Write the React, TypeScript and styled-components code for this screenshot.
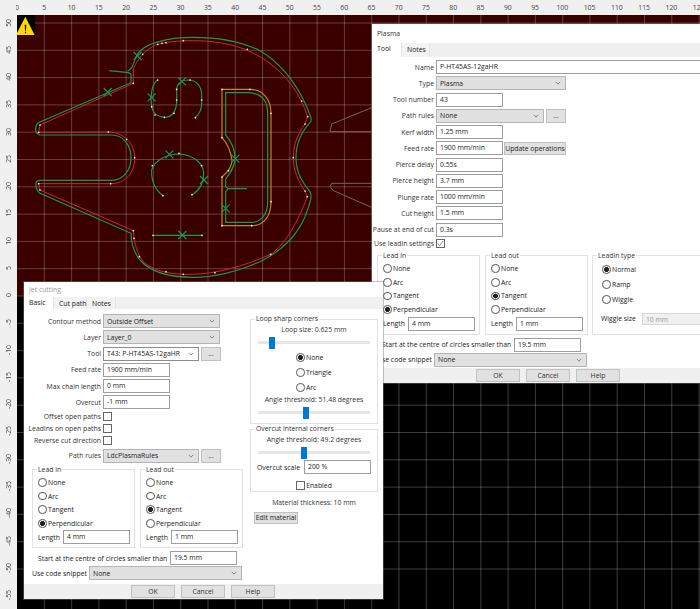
import React from 'react';
import styled, { createGlobalStyle } from 'styled-components';

const GlobalStyle = createGlobalStyle`
  html, body {
    margin: 0;
    padding: 0;
    background: #000;
  }
  * {
    box-sizing: border-box;
  }
`;

const TICK = 27.28;
const topTicks = Array.from({ length: 27 }, (_, i) => i * 5);
const leftTicks = Array.from({ length: 22 }, (_, i) => 50 - i * 5);
const gridX = Array.from({ length: 26 }, (_, i) => 133 + i * 81.84);
const gridY = Array.from({ length: 21 }, (_, i) => 69 + i * 81.9);

const dots = [
  [120, 375], [116, 397], [325, 396], [380, 418], [404, 473], [332, 551], [116, 551], [120, 570],
  [400, 692], [402, 715], [418, 770], [498, 815], [550, 823], [645, 818], [812, 763], [922, 590],
  [915, 573], [880, 473], [915, 372], [923, 350], [905, 303], [742, 148], [550, 122], [498, 128],
  [486, 130], [473, 133], [428, 163], [400, 250], [473, 240], [530, 268], [530, 300], [522, 340],
  [493, 352], [465, 345], [455, 320], [570, 240], [605, 300], [605, 497], [586, 353], [489, 587],
  [457, 497], [537, 460], [576, 584], [459, 706], [606, 706], [666, 268], [750, 268], [813, 340],
  [813, 605], [755, 677], [666, 677], [666, 531], [685, 512], [666, 413],
];

const crosses = [
  [413, 168], [323, 276], [455, 292], [546, 244], [508, 463], [612, 540], [706, 476], [677, 625], [547, 705],
];

const Chevron = () => (
  <ChevronIcon viewBox="0 0 8 5">
    <path d="M1 1l3 3 3-3" fill="none" stroke="#555" strokeWidth="0.9" />
  </ChevronIcon>
);

const Drawing = () => (
  <CanvasSvg viewBox="51 45 2049 1782">
    <rect x="51" y="45" width="2049" height="843" fill="#3a0000" />
    {gridX.map((x) => (
      <line key={x} x1={x} y1="45" x2={x} y2="1827" stroke="rgba(255,255,255,0.24)" strokeWidth="3" />
    ))}
    {gridY.map((y) => (
      <line key={y} x1="51" y1={y} x2="2100" y2={y} stroke="rgba(255,255,255,0.24)" strokeWidth="3" />
    ))}
    <path
      d="M1115 323L995 372L990 395H1115M1115 550H995L990 560L1000 572L1115 622"
      fill="none"
      stroke="#7a6060"
      strokeWidth="3"
    />
    <path
      d="M400 250L120 375L116 397L325 396C370 396 404 430 404 473C404 520 375 551 332 551L116 551L120 570L400 692L402 715C408 745 415 770 435 790C470 815 510 823 570 823C650 823 740 795 812 763C860 730 895 660 922 590L915 573C895 545 880 510 880 473C880 430 895 400 915 372L923 350C900 280 860 225 800 183C750 148 680 122 580 122C520 122 470 128 450 145C425 160 405 190 400 210Z"
      fill="none"
      stroke="#c8282d"
      strokeWidth="3"
    />
    <path
      d="M666 268H750C790 268 813 300 813 340V605C813 650 790 677 755 677H666V531L685 512C692 500 696 490 696 480C692 455 682 430 666 413Z"
      fill="none"
      stroke="#c08a10"
      strokeWidth="3.5"
    />
    <g fill="none" stroke="#159a50" strokeWidth="3.5">
      <path d="M328 212L385 218L393 222V248L118 367Q108 372 107 385Q105 398 118 405H335C370 405 393 435 393 473C393 510 370 541 335 541H120Q110 541 108 548Q105 568 120 580L393 700C393 730 400 755 420 780C450 815 510 832 580 832C640 832 700 820 780 785C830 760 885 720 915 650C930 610 938 590 930 575C910 550 888 520 888 473C888 430 905 395 930 368C938 360 930 345 920 320C885 240 830 180 780 152C725 125 650 112 580 112C540 112 505 116 480 124C445 132 420 145 407 172C400 190 398 208 383 213" />
      <path d="M741 566H685L677 575V667H755C785 667 803 640 803 605V340C803 300 785 278 740 278H677V405C690 420 705 445 705 475C705 500 690 520 677 537V560L685 566" />
      <path d="M473 240C455 250 450 290 455 320C460 345 480 352 495 352C520 350 530 330 530 300V270C530 250 545 240 565 240C590 240 605 260 605 285V310C605 330 595 345 586 353" />
      <path d="M489 587C465 570 453 540 455 510C465 480 500 462 540 462C580 465 610 490 611 520C612 545 600 570 577 584" />
      <path d="M459 706H606" />
      {crosses.map(([x, y]) => (
        <path key={x} d={`M${x - 12} ${y - 12}L${x + 12} ${y + 12}M${x + 12} ${y - 12}L${x - 12} ${y + 12}`} />
      ))}
    </g>
    {dots.map(([x, y]) => (
      <circle key={`${x}-${y}`} cx={x} cy={y} r="2.6" fill="#f4e8e8" />
    ))}
    <rect x="51" y="45" width="54" height="60" fill="#000" />
    <path d="M48 105L76 50L104 105Z" fill="#ffd800" />
    <path d="M74 74H79L78 92H75ZM74.5 95H78.5V100H74.5Z" fill="#222" />
  </CanvasSvg>
);

const Field = ({ width, children }: { width: number; children: React.ReactNode }) => (
  <InputBox $width={width}>{children}</InputBox>
);

const Combo = ({ width, light, children }: { width: number; light?: boolean; children: React.ReactNode }) => (
  <ComboBox $width={width} $light={light}>
    <span>{children}</span>
    <Chevron />
  </ComboBox>
);

const Choice = ({ checked, children }: { checked?: boolean; children: React.ReactNode }) => (
  <ChoiceRow>
    <RadioDot $checked={checked} />
    {children}
  </ChoiceRow>
);

const LeadGroup = ({ title, selected, length }: { title: string; selected: string; length: string }) => (
  <Group $width={103}>
    <Legend>{title}</Legend>
    {['None', 'Arc', 'Tangent', 'Perpendicular'].map((option) => (
      <Choice key={option} checked={option === selected}>
        {option}
      </Choice>
    ))}
    <LengthRow>
      <span>Length</span>
      <Field width={67}>{length}</Field>
    </LengthRow>
  </Group>
);

const PlasmaDialog = () => (
  <Dialog $left={372} $top={24} $width={340} $height={359}>
    <Title>Plasma</Title>
    <Tabs>
      <Tab $active $width={30}>
        Tool
      </Tab>
      <Tab $width={28}>Notes</Tab>
    </Tabs>
    <PlasmaBody>
      <Row>
        <RowLabel $width={62}>Name</RowLabel>
        <Field width={280}>P-HT45AS-12gaHR</Field>
      </Row>
      <Row>
        <RowLabel $width={62}>Type</RowLabel>
        <Combo width={130}>Plasma</Combo>
      </Row>
      <Row>
        <RowLabel $width={62}>Tool number</RowLabel>
        <Field width={67}>43</Field>
      </Row>
      <Row>
        <RowLabel $width={62}>Path rules</RowLabel>
        <Combo width={108}>None</Combo>
        <DotsButton>...</DotsButton>
      </Row>
      <Row>
        <RowLabel $width={62}>Kerf width</RowLabel>
        <Field width={67}>1.25 mm</Field>
      </Row>
      <Row>
        <RowLabel $width={62}>Feed rate</RowLabel>
        <Field width={67}>1900 mm/min</Field>
        <ActionButton $width={62}>Update operations</ActionButton>
      </Row>
      <Row>
        <RowLabel $width={62}>Pierce delay</RowLabel>
        <Field width={67}>0.55s</Field>
      </Row>
      <Row>
        <RowLabel $width={62}>Pierce height</RowLabel>
        <Field width={67}>3.7 mm</Field>
      </Row>
      <Row>
        <RowLabel $width={62}>Plunge rate</RowLabel>
        <Field width={67}>1000 mm/min</Field>
      </Row>
      <Row>
        <RowLabel $width={62}>Cut height</RowLabel>
        <Field width={67}>1.5 mm</Field>
      </Row>
      <Row>
        <RowLabel $width={62}>Pause at end of cut</RowLabel>
        <Field width={67}>0.3s</Field>
      </Row>
      <CheckRow>
        <RowLabel $width={62}>Use leadin settings</RowLabel>
        <CheckBox>
          <CheckMark viewBox="0 0 8 8">
            <path d="M1 4l2 2.4L7 1" fill="none" stroke="#666" strokeWidth="0.9" />
          </CheckMark>
        </CheckBox>
      </CheckRow>
      <GroupRow>
        <LeadGroup title="Lead in" selected="Perpendicular" length="4 mm" />
        <LeadGroup title="Lead out" selected="Tangent" length="1 mm" />
        <TypeGroup $width={130}>
          <Legend>Leadin type</Legend>
          <WideChoices>
            <Choice checked>Normal</Choice>
            <Choice>Ramp</Choice>
            <Choice>Wiggle</Choice>
          </WideChoices>
          <WiggleRow>
            <span>Wiggle size</span>
            <DisabledBox>10 mm</DisabledBox>
          </WiggleRow>
        </TypeGroup>
      </GroupRow>
      <StartRow $indent={10} $labelWidth={132}>
        <span>Start at the centre of circles smaller than</span>
        <Field width={67}>19.5 mm</Field>
      </StartRow>
      <SnippetRow $indent={5} $labelWidth={57}>
        <span>Use code snippet</span>
        <Combo width={153}>None</Combo>
      </SnippetRow>
    </PlasmaBody>
    <Footer $indent={104}>
      <FooterButton>OK</FooterButton>
      <FooterButton>Cancel</FooterButton>
      <FooterButton>Help</FooterButton>
    </Footer>
  </Dialog>
);

const JetDialog = () => (
  <Dialog $left={24} $top={282} $width={359} $height={317}>
    <Title $muted $height={15}>
      Jet cutting
    </Title>
    <Tabs $height={12}>
      <Tab $active $width={30}>
        Basic
      </Tab>
      <Tab $width={33}>Cut path</Tab>
      <Tab $width={29}>Notes</Tab>
    </Tabs>
    <JetBody>
      <LeftColumn>
        <Row>
          <RowLabel $width={77}>Contour method</RowLabel>
          <Combo width={117}>Outside Offset</Combo>
        </Row>
        <Row>
          <RowLabel $width={77}>Layer</RowLabel>
          <Combo width={117}>Layer_0</Combo>
        </Row>
        <Row>
          <RowLabel $width={77}>Tool</RowLabel>
          <Combo width={96} light>
            T43: P-HT45AS-12gaHR
          </Combo>
          <DotsButton>...</DotsButton>
        </Row>
        <Row>
          <RowLabel $width={77}>Feed rate</RowLabel>
          <Field width={67}>1900 mm/min</Field>
        </Row>
        <Row>
          <RowLabel $width={77}>Max chain length</RowLabel>
          <Field width={67}>0 mm</Field>
        </Row>
        <Row>
          <RowLabel $width={77}>Overcut</RowLabel>
          <Field width={67}>-1 mm</Field>
        </Row>
        <JetCheckRow>
          <RowLabel $width={77}>Offset open paths</RowLabel>
          <CheckBox />
        </JetCheckRow>
        <JetCheckRow>
          <RowLabel $width={77}>Leadins on open paths</RowLabel>
          <CheckBox />
        </JetCheckRow>
        <JetCheckRow>
          <RowLabel $width={77}>Reverse cut direction</RowLabel>
          <CheckBox />
        </JetCheckRow>
        <PathRulesRow>
          <RowLabel $width={77}>Path rules</RowLabel>
          <Combo width={96}>LdcPlasmaRules</Combo>
          <DotsButton>...</DotsButton>
        </PathRulesRow>
        <JetGroupRow>
          <LeadGroup title="Lead in" selected="Perpendicular" length="4 mm" />
          <LeadGroup title="Lead out" selected="Tangent" length="1 mm" />
        </JetGroupRow>
        <StartRow $indent={14} $labelWidth={132}>
          <span>Start at the centre of circles smaller than</span>
          <Field width={67}>19.5 mm</Field>
        </StartRow>
        <SnippetRow $indent={8} $labelWidth={57}>
          <span>Use code snippet</span>
          <Combo width={153}>None</Combo>
        </SnippetRow>
      </LeftColumn>
      <RightColumn>
        <Group $width={128}>
          <Legend>Loop sharp corners</Legend>
          <Caption>Loop size: 0.625 mm</Caption>
          <SliderTrack>
            <SliderThumb $at={11} />
          </SliderTrack>
          <CenterChoices>
            <Choice checked>None</Choice>
            <Choice>Triangle</Choice>
            <Choice>Arc</Choice>
          </CenterChoices>
          <Caption>Angle threshold: 51.48 degrees</Caption>
          <SliderTrack>
            <SliderThumb $at={45} />
          </SliderTrack>
        </Group>
        <OvercutGroup $width={128}>
          <Legend>Overcut internal corners</Legend>
          <Caption>Angle threshold: 49.2 degrees</Caption>
          <SliderTrack>
            <SliderThumb $at={43} />
          </SliderTrack>
          <ScaleRow>
            <span>Overcut scale</span>
            <Field width={67}>200 %</Field>
          </ScaleRow>
          <EnabledRow>
            <CheckBox />
            Enabled
          </EnabledRow>
        </OvercutGroup>
        <Material>Material thickness: 10 mm</Material>
        <EditButton $width={44}>Edit material</EditButton>
      </RightColumn>
    </JetBody>
    <Footer $indent={107}>
      <FooterButton>OK</FooterButton>
      <FooterButton>Cancel</FooterButton>
      <FooterButton>Help</FooterButton>
    </Footer>
  </Dialog>
);

export default function App() {
  return (
    <>
      <GlobalStyle />
      <Desktop>
        <TopRuler>
          <TopTicks>
            {topTicks.map((tick) => (
              <TopTick key={tick}>{tick}</TopTick>
            ))}
          </TopTicks>
        </TopRuler>
        <Workspace>
          <LeftRuler>
            {leftTicks.map((tick) => (
              <LeftTick key={tick}>
                <span>{tick}</span>
              </LeftTick>
            ))}
          </LeftRuler>
          <Canvas>
            <Drawing />
          </Canvas>
        </Workspace>
        <PlasmaDialog />
        <JetDialog />
      </Desktop>
    </>
  );
}

const Desktop = styled.div`
  position: relative;
  display: flex;
  flex-direction: column;
  width: 700px;
  height: 609px;
  overflow: hidden;

  font-family: 'Open Sans', 'Liberation Sans', sans-serif;
  font-size: 6.85px;
  color: #222;
  filter: blur(0.45px);
`;

const TopRuler = styled.div`
  flex: none;
  height: 15px;
  padding-left: 16px;

  background: #f0f0f0;
  color: #444;
`;

const TopTicks = styled.div`
  display: flex;
  height: 100%;
  overflow: hidden;
`;

const TopTick = styled.div`
  flex: none;
  width: ${TICK}px;
  line-height: 15px;
  text-align: center;

  &:first-child {
    margin-left: -${TICK / 2 - 1}px;
  }
`;

const Workspace = styled.div`
  display: flex;
  flex: 1;
  min-height: 0;
`;

const LeftRuler = styled.div`
  display: flex;
  flex: none;
  flex-direction: column;
  width: 17px;
  overflow: hidden;

  background: #f0f0f0;
  color: #444;
`;

const LeftTick = styled.div`
  display: flex;
  flex: none;
  align-items: center;
  justify-content: center;
  height: ${TICK}px;

  &:first-child {
    margin-top: -${TICK / 2 - 7.5}px;
  }

  span {
    writing-mode: vertical-rl;
    transform: rotate(180deg);
    white-space: nowrap;
  }
`;

const Canvas = styled.div`
  flex: 1;
  background: #000;
`;

const CanvasSvg = styled.svg`
  display: block;
  width: 683px;
  height: 594px;
`;

const Dialog = styled.section<{ $left: number; $top: number; $width: number; $height: number }>`
  position: absolute;
  left: ${({ $left }) => $left}px;
  top: ${({ $top }) => $top}px;
  display: flex;
  flex-direction: column;
  width: ${({ $width }) => $width}px;
  height: ${({ $height }) => $height}px;

  background: #fff;
  box-shadow: 0 0 0 1px rgba(120, 120, 120, 0.45);
`;

const Title = styled.div<{ $muted?: boolean; $height?: number }>`
  flex: none;
  height: ${({ $height }) => $height ?? 19}px;
  padding-left: 5px;
  line-height: ${({ $height }) => $height ?? 19}px;
  color: ${({ $muted }) => ($muted ? '#9a9a9a' : '#333')};
`;

const Tabs = styled.div<{ $height?: number }>`
  display: flex;
  flex: none;
  height: ${({ $height }) => $height ?? 14}px;
  background: #f0f0f0;
`;

const Tab = styled.div<{ $active?: boolean; $width?: number }>`
  width: ${({ $width }) => $width ?? 28}px;
  height: 100%;
  padding-top: ${({ $active }) => ($active ? 0 : 1)}px;
  padding-left: 5px;
  line-height: 12px;
  white-space: nowrap;

  background: ${({ $active }) => ($active ? '#fff' : '#f3f3f3')};
  border-right: 1px solid #e4e4e4;
`;

const PlasmaBody = styled.div`
  display: flex;
  flex: 1;
  flex-direction: column;
  padding-top: 3px;
`;

const JetBody = styled.div`
  display: flex;
  flex: 1;
  gap: 4px;
`;

const LeftColumn = styled.div`
  display: flex;
  flex-direction: column;
  width: 222px;
  padding-top: 5px;
`;

const RightColumn = styled.div`
  display: flex;
  flex-direction: column;
  padding-top: 4px;
`;

const Row = styled.div`
  display: flex;
  flex: none;
  align-items: center;
  gap: 2px;
  height: 14px;
  margin-bottom: 2.25px;
`;

const CheckRow = styled(Row)`
  height: 9px;
  margin-bottom: 2px;
`;

const JetCheckRow = styled(Row)`
  height: 9px;
  margin-bottom: 3px;
`;

const PathRulesRow = styled(Row)`
  margin-top: 1px;
  margin-bottom: 1px;
`;

const RowLabel = styled.div<{ $width: number }>`
  flex: none;
  width: ${({ $width }) => $width}px;
  text-align: right;
  white-space: nowrap;
  color: #333;
`;

const InputBox = styled.div<{ $width: number }>`
  flex: none;
  width: ${({ $width }) => $width}px;
  height: 14px;
  padding-left: 3px;
  line-height: 12px;
  white-space: nowrap;

  background: #fff;
  border: 1px solid #9e9e9e;
`;

const ComboBox = styled.div<{ $width: number; $light?: boolean }>`
  display: flex;
  flex: none;
  align-items: center;
  justify-content: space-between;
  width: ${({ $width }) => $width}px;
  height: 14px;
  padding: 0 4px 0 3px;
  white-space: nowrap;

  background: ${({ $light }) => ($light ? '#fff' : '#e1e1e1')};
  border: 1px solid ${({ $light }) => ($light ? '#8c8c8c' : '#b4b4b4')};
`;

const ChevronIcon = styled.svg`
  flex: none;
  width: 6px;
  height: 4px;
`;

const PlainButton = styled.div`
  flex: none;
  text-align: center;
  white-space: nowrap;

  background: #e1e1e1;
  border: 1px solid #c0c0c0;
`;

const DotsButton = styled(PlainButton)`
  width: 20px;
  height: 14px;
  line-height: 12px;
`;

const ActionButton = styled(PlainButton)<{ $width: number }>`
  width: ${({ $width }) => $width}px;
  height: 13px;
  margin-left: -1px;
  line-height: 11px;
  color: #222;
`;

const EditButton = styled(PlainButton)<{ $width: number }>`
  width: ${({ $width }) => $width}px;
  height: 12px;
  margin: 5px 0 0 4px;
  line-height: 10px;
`;

const CheckBox = styled.div`
  display: flex;
  flex: none;
  align-items: center;
  justify-content: center;
  width: 9px;
  height: 9px;

  background: #fff;
  border: 1px solid #666;
`;

const CheckMark = styled.svg`
  width: 7px;
  height: 7px;
`;

const GroupRow = styled.div`
  display: flex;
  gap: 5px;
  padding-left: 5px;
`;

const JetGroupRow = styled(GroupRow)`
  padding-left: 8px;
`;

const Group = styled.fieldset<{ $width: number }>`
  flex: none;
  width: ${({ $width }) => $width}px;
  min-width: 0;
  margin: 0;
  padding: 0 4px 3px;
  border: 1px solid #e2e2e2;
`;

const TypeGroup = styled(Group)`
  margin-left: -1px;
`;

const OvercutGroup = styled(Group)`
  margin-top: -1px;
  padding-bottom: 0;
`;

const Legend = styled.legend`
  height: 12px;
  padding: 0 1px;
  line-height: 12px;
  color: #333;
`;

const ChoiceRow = styled.div`
  display: flex;
  align-items: center;
  gap: 1.5px;
  height: 13.7px;
  padding-left: 1px;
  white-space: nowrap;
`;

const RadioDot = styled.span<{ $checked?: boolean }>`
  flex: none;
  width: 8.5px;
  height: 8.5px;
  border: 1px solid #555;
  border-radius: 50%;
  background: ${({ $checked }) => ($checked ? 'radial-gradient(circle, #222 0 2.2px, #fff 2.7px)' : '#fff')};
`;

const LengthRow = styled.div`
  display: flex;
  align-items: center;
  justify-content: space-between;
  height: 14px;
  padding-left: 1px;
`;

const WideChoices = styled.div`
  padding-left: 4px;

  & > div {
    height: 15px;
  }
`;

const WiggleRow = styled.div`
  display: flex;
  align-items: center;
  gap: 6px;
  height: 12px;
  margin: 6px 0 0 4px;
  white-space: nowrap;
`;

const DisabledBox = styled.div`
  flex: none;
  width: 70px;
  height: 12px;
  padding-left: 3px;
  line-height: 11px;
  color: #9a9a9a;
  background: #f0f0f0;
  border: 1px solid #d8d8d8;
`;

const StartRow = styled.div<{ $indent: number; $labelWidth: number }>`
  display: flex;
  align-items: center;
  height: 14px;
  margin-top: 3px;
  padding-left: ${({ $indent }) => $indent}px;
  white-space: nowrap;

  & > span {
    flex: none;
    width: ${({ $labelWidth }) => $labelWidth}px;
  }
`;

const SnippetRow = styled(StartRow)`
  margin-top: 1px;
`;

const Caption = styled.div`
  height: 10px;
  line-height: 10px;
  text-align: center;
  white-space: nowrap;
  color: #333;
`;

const SliderTrack = styled.div`
  position: relative;
  height: 3px;
  margin: 6px 3px;
  background: #e6e6e6;
`;

const SliderThumb = styled.div<{ $at: number }>`
  position: absolute;
  top: -4.5px;
  left: ${({ $at }) => $at}px;
  width: 6px;
  height: 12px;
  background: #0078d7;
`;

const CenterChoices = styled.div`
  margin: 2px 0 0 40px;

  & > div {
    height: 15px;
  }
`;

const ScaleRow = styled.div`
  display: flex;
  align-items: center;
  justify-content: space-between;
  height: 14px;
  margin-top: 4px;
  padding: 0 2px;
`;

const EnabledRow = styled.div`
  display: flex;
  align-items: center;
  justify-content: center;
  gap: 1px;
  height: 12px;
  margin-top: 5px;
`;

const Material = styled.div`
  width: 128px;
  margin-top: 6px;
  text-align: center;
  color: #333;
`;

const Footer = styled.div<{ $indent: number }>`
  display: flex;
  flex: none;
  gap: 6px;
  height: 15px;
  padding: 1px 0 0 ${({ $indent }) => $indent}px;
  background: #f0f0f0;
`;

const FooterButton = styled(PlainButton)`
  width: 44px;
  height: 13px;
  line-height: 11px;
  color: #333;
`;
